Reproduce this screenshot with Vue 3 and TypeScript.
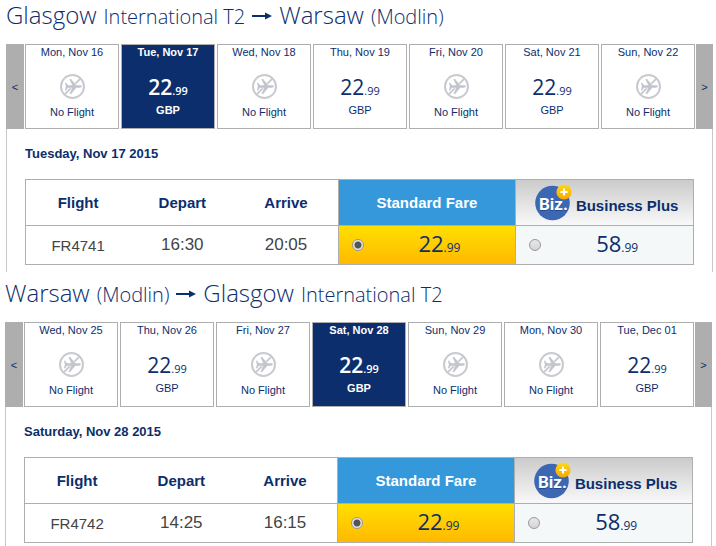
<script setup lang="ts">
import { reactive } from 'vue'

interface Place {
  city: string
  detail: string
}

interface Day {
  label: string
  available: boolean
}

interface Leg {
  id: string
  from: Place
  to: Place
  days: Day[]
  selected: number
  dateTitle: string
  flight: string
  depart: string
  arrive: string
  fare: 'standard' | 'business'
}

const glasgow: Place = { city: 'Glasgow', detail: 'International T2' }
const warsaw: Place = { city: 'Warsaw', detail: '(Modlin)' }

const legs = reactive<Leg[]>([
  {
    id: 'outbound',
    from: glasgow,
    to: warsaw,
    days: [
      { label: 'Mon, Nov 16', available: false },
      { label: 'Tue, Nov 17', available: true },
      { label: 'Wed, Nov 18', available: false },
      { label: 'Thu, Nov 19', available: true },
      { label: 'Fri, Nov 20', available: false },
      { label: 'Sat, Nov 21', available: true },
      { label: 'Sun, Nov 22', available: false },
    ],
    selected: 1,
    dateTitle: 'Tuesday, Nov 17 2015',
    flight: 'FR4741',
    depart: '16:30',
    arrive: '20:05',
    fare: 'standard',
  },
  {
    id: 'inbound',
    from: warsaw,
    to: glasgow,
    days: [
      { label: 'Wed, Nov 25', available: false },
      { label: 'Thu, Nov 26', available: true },
      { label: 'Fri, Nov 27', available: false },
      { label: 'Sat, Nov 28', available: true },
      { label: 'Sun, Nov 29', available: false },
      { label: 'Mon, Nov 30', available: false },
      { label: 'Tue, Dec 01', available: true },
    ],
    selected: 3,
    dateTitle: 'Saturday, Nov 28 2015',
    flight: 'FR4742',
    depart: '14:25',
    arrive: '16:15',
    fare: 'standard',
  },
])
</script>

<template>
  <main class="page">
    <section v-for="leg in legs" :key="leg.id" class="leg" :class="leg.id">
      <h2 class="route">
        <span class="city">{{ leg.from.city }}</span>
        <span class="detail">{{ leg.from.detail }}</span>
        <svg class="arrow" viewBox="0 0 20 8" aria-hidden="true">
          <path d="M0 3h13V0.6L20 4l-7 3.4V5H0z" />
        </svg>
        <span class="city">{{ leg.to.city }}</span>
        <span class="detail">{{ leg.to.detail }}</span>
      </h2>

      <div class="strip">
        <button type="button" class="nav prev">&lt;</button>
        <div class="days">
          <button
            v-for="(day, i) in leg.days"
            :key="day.label"
            type="button"
            class="day"
            :class="{ active: i === leg.selected }"
            @click="leg.selected = i"
          >
            <span class="day-label">{{ day.label }}</span>
            <template v-if="day.available">
              <span class="day-price">22<small>.99</small></span>
              <span class="currency">GBP</span>
            </template>
            <template v-else>
              <svg class="no-plane" viewBox="0 0 25 25" aria-hidden="true">
                <path d="M4.4 20.6 20.4 4.6" />
                <path
                  class="plane"
                  d="M5 8.8h1.1l1.9 2.5h4.3L9.4 5h1.7l5.2 6.3h3.2c1.5 0 2.4.5 2.4 1.2s-.9 1.2-2.4 1.2h-3.2L11.1 20H9.4l2.9-6.3H8l-1.9 2.5H5l.9-3.7z"
                />
                <circle cx="12.5" cy="12.5" r="11.5" />
              </svg>
              <span class="none">No Flight</span>
            </template>
          </button>
        </div>
        <button type="button" class="nav next">&gt;</button>
      </div>

      <div class="panel">
        <h3 class="date">{{ leg.dateTitle }}</h3>
        <table class="fares">
          <colgroup>
            <col class="col-info" />
            <col class="col-info" />
            <col class="col-info" />
            <col class="col-fare" />
            <col class="col-fare" />
          </colgroup>
          <thead>
            <tr>
              <th scope="col">Flight</th>
              <th scope="col">Depart</th>
              <th scope="col">Arrive</th>
              <th scope="col" class="standard-head">Standard Fare</th>
              <th scope="col" class="business-head">
                <div class="business">
                  <svg class="biz" viewBox="0 0 37 37" aria-hidden="true">
                    <defs>
                      <linearGradient :id="leg.id + '-badge'" x1="0" y1="0" x2="0" y2="1">
                        <stop offset="0" stop-color="#ffd813" />
                        <stop offset="1" stop-color="#f5a800" />
                      </linearGradient>
                    </defs>
                    <circle cx="17.5" cy="19" r="17.3" fill="#3b67b3" />
                    <text class="biz-shadow" x="4" y="27">Biz.</text>
                    <text class="biz-text" x="4" y="26">Biz.</text>
                    <circle cx="29" cy="8" r="7.6" :fill="`url(#${leg.id}-badge)`" />
                    <path d="M29 4.4v7.2M25.4 8h7.2" stroke="#fff" stroke-width="2" />
                  </svg>
                  <span>Business Plus</span>
                </div>
              </th>
            </tr>
          </thead>
          <tbody>
            <tr>
              <td class="flight">{{ leg.flight }}</td>
              <td class="time">{{ leg.depart }}</td>
              <td class="time">{{ leg.arrive }}</td>
              <td class="standard-cell">
                <label class="fare">
                  <input v-model="leg.fare" type="radio" :name="leg.id + '-fare'" value="standard" />
                  <span class="price">22<small>.99</small></span>
                </label>
              </td>
              <td class="business-cell">
                <label class="fare">
                  <input v-model="leg.fare" type="radio" :name="leg.id + '-fare'" value="business" />
                  <span class="price">58<small>.99</small></span>
                </label>
              </td>
            </tr>
          </tbody>
        </table>
      </div>
    </section>
  </main>
</template>

<style>
body {
  margin: 0;
  background: #fff;
}
</style>

<style scoped>
.page {
  display: flex;
  flex-direction: column;
  gap: 6px;
  color: #0c2e6c;
  font-family: "Liberation Sans", Arial, sans-serif;
  font-size: 11px;
}

.outbound {
  padding: 0 3px 0 6px;
}

.inbound {
  padding: 0 4px 0 5px;
}

.route {
  display: flex;
  align-items: baseline;
  gap: 7px;
  margin: 0 0 12px;
  font-family: "Open Sans", "Noto Sans", sans-serif;
  font-weight: 300;
  font-size: 24px;
  line-height: 30px;
  white-space: nowrap;
}

.detail {
  font-size: 20px;
}

.arrow {
  flex: none;
  align-self: center;
  width: 20px;
  height: 8px;
  fill: #0c2e6c;
}

.strip {
  display: flex;
  gap: 1px;
}

.nav {
  flex: none;
  width: 17px;
  padding: 0;
  border: 0;
  background: #aeaeae;
  color: #0c2e6c;
  font: inherit;
}

.prev {
  width: 18px;
}

.days {
  display: grid;
  flex: 1;
  grid-template-columns: repeat(7, 1fr);
  gap: 2px;
}

.day {
  display: flex;
  flex-direction: column;
  align-items: center;
  justify-content: flex-start;
  height: 85px;
  padding: 1px 0 0;
  border: 1px solid #aeaeae;
  background: #fff;
  color: inherit;
  font: inherit;
  line-height: 13px;
  white-space: nowrap;
}

.day.active {
  background: #0c2e6c;
  color: #fff;
  font-weight: 700;
}

.day-price {
  margin-top: 15px;
  font-family: "Open Sans", "Noto Sans", sans-serif;
  font-size: 21px;
  font-weight: 500;
  line-height: 27px;
}

.day.active .day-price {
  font-weight: 600;
}

.day-price small {
  font-size: 11px;
}

.no-plane {
  width: 25px;
  height: 25px;
  margin: 15px 0 7px;
  fill: none;
  stroke: #c9cad0;
  stroke-width: 2;
}

.no-plane .plane {
  fill: #c4c5cc;
  stroke: #fff;
  stroke-width: 1;
  paint-order: stroke;
}

.panel {
  padding: 17px 18px 7px;
  border: solid #c8c8c8;
  border-width: 0 1px;
}

.inbound .panel {
  padding-bottom: 3px;
}

.date {
  margin: 0 0 18px;
  font-size: 13px;
  line-height: 15px;
}

.fares {
  width: 100%;
  border-collapse: separate;
  border-spacing: 0;
  border: solid #aeaeae;
  border-width: 1px 0 0 1px;
  table-layout: fixed;
}

.col-info {
  width: 15.6%;
}

.fares th,
.fares td {
  padding: 0;
  border-bottom: 1px solid #aeaeae;
  text-align: center;
}

.fares th {
  height: 45px;
  font-size: 15px;
}

.fares td {
  height: 38px;
  color: #444;
}

.fares th:nth-child(n + 3),
.fares td:nth-child(n + 3) {
  border-right: 1px solid #aeaeae;
}

.fares .standard-head {
  background: #3498db;
  color: #fff;
}

.business-head {
  background: linear-gradient(#cbcbcb, #f9f9fa);
}

.business {
  display: flex;
  align-items: center;
  justify-content: center;
  gap: 4px;
  padding-left: 4px;
}

.business span {
  padding-top: 6px;
}

.biz {
  flex: none;
  width: 37px;
  height: 37px;
}

.biz-text,
.biz-shadow {
  fill: #fff;
  font-family: Roboto, "Liberation Sans", sans-serif;
  font-size: 17px;
  font-weight: 700;
}

.biz-shadow {
  fill: #254a8c;
}

.fares .flight {
  font-size: 15px;
}

.fares .time {
  font-size: 17px;
}

.standard-cell {
  background: linear-gradient(#ffdf00, #ffb900);
}

.business-cell {
  background: #f4f8f9;
}

.fare {
  display: flex;
  align-items: center;
  padding-left: 13px;
  color: #0c2e6c;
}

.fare input {
  flex: none;
  width: 12px;
  height: 12px;
  margin: 0;
  border: 1px solid #999;
  border-radius: 50%;
  appearance: none;
  background: linear-gradient(#e8e8e8, #d5d5d5);
}

.fare input:checked {
  background: radial-gradient(circle, #555 0 3px, #e4e4e4 4px);
}

.price {
  flex: 1;
  font-family: "Open Sans", "Noto Sans", sans-serif;
  font-size: 22px;
  line-height: 30px;
}

.price small {
  font-size: 12px;
}
</style>
